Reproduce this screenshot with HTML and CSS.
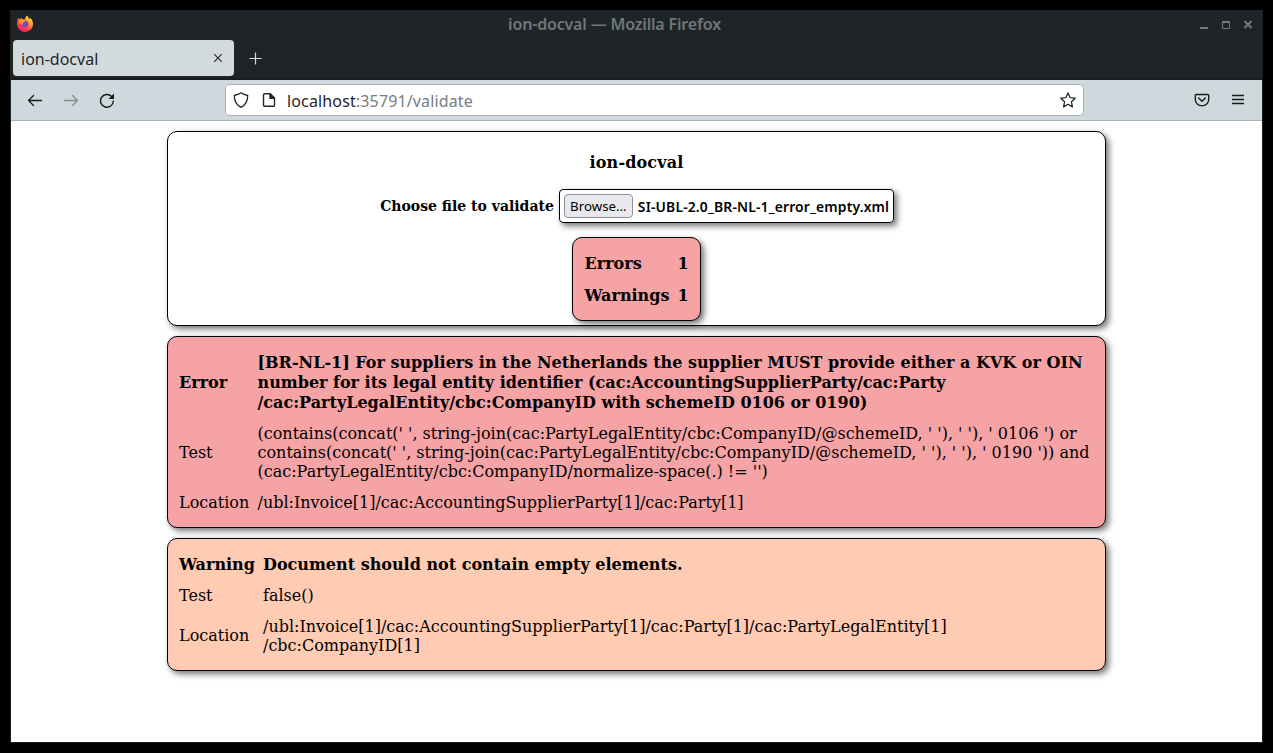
FILE: index.html
```html
<!DOCTYPE html>
<html lang="en">
<head>
<meta charset="utf-8">
<title>ion-docval</title>
<link rel="stylesheet" href="styles.css">
</head>
<body>
<div class="window">
  <header class="titlebar">
    <svg class="logo" width="18" height="18" viewBox="0 0 18 18">
      <defs>
        <linearGradient id="flame" x1="0.9" y1="0" x2="0.3" y2="1"><stop offset="0" stop-color="#fff04a"/><stop offset=".4" stop-color="#ffa022"/><stop offset=".75" stop-color="#ff3a48"/><stop offset="1" stop-color="#ee1878"/></linearGradient>
      </defs>
      <path fill="url(#flame)" d="M1.800 4.200 2.700 3l1.200 1.400L5.200 3l1.400 1.300 2.600.2C9 2.700 10 1.200 11.500.5c.2 1.600 1.200 2.400 2.300 3.400l.4-.8c2 1.600 3 4.200 2.800 6.700A8 7.800 0 0 1 9 16.900 8 7.800 0 0 1 1 9.300C1 7.500 1.200 5.700 1.800 4.200Z"/>
      <circle cx="9" cy="9" r="3.300" fill="#7644d8"/>
      <path fill="#ff9a22" d="M3.500 5.500c2-1.500 4.500-.8 5.600.9-1 .8-1.800.5-2.200 1.400-.4 1 .2 1.500-.7 2.300-1.800-.6-2.900-2.600-2.700-4.600Z"/>
    </svg>
    <div class="caption">ion-docval — Mozilla Firefox</div>
    <svg class="controls" width="56" height="12" viewBox="0 0 56 12" fill="none" stroke="#757b7d">
      <path stroke-width="2" d="M1 9h8"/>
      <path d="M23.500 3v6.500h7V3"/><path stroke-width="2" d="M23 3h8"/>
      <path stroke-width="2" d="m45.500 2 7 7M52.500 2l-7 7"/>
    </svg>
  </header>
  <div class="tabs">
    <div class="tab"><span>ion-docval</span>
      <svg width="10" height="10" viewBox="0 0 10 10" fill="none" stroke="#24282a" stroke-width="1.100"><path d="m1.200 1.200 7.600 7.600m0-7.600L1.200 8.800"/></svg>
    </div>
    <svg class="plus" width="13" height="13" viewBox="0 0 13 13" fill="none" stroke="#d8dcdd" stroke-width="1.200"><path d="M6.500 .5v12M.5 6.500h12"/></svg>
  </div>
  <nav class="toolbar">
    <div class="nav">
      <svg width="16" height="16" viewBox="0 0 16 16" fill="none" stroke="#171a1c" stroke-width="1.300" stroke-linecap="round" stroke-linejoin="round"><path d="M14.500 8.500H1.500m5-5-5 5 5 5"/></svg>
      <svg width="16" height="16" viewBox="0 0 16 16" fill="none" stroke="#858b8f" stroke-width="1.300" stroke-linecap="round" stroke-linejoin="round"><path d="M1.500 8.500h13m-5-5 5 5-5 5"/></svg>
      <svg width="16" height="16" viewBox="0 0 16 16" fill="none" stroke="#171a1c" stroke-width="1.400" stroke-linecap="round"><path d="M14.300 9A6.400 6.400 0 1 1 12.400 4.300"/><path fill="#171a1c" stroke="none" d="M15 1.500v5.500H9.500Z"/></svg>
    </div>
    <div class="address">
      <svg width="16" height="16" viewBox="0 0 16 16" fill="none" stroke="#24282a" stroke-width="1.300" stroke-linejoin="round"><path d="M8 .8C6.400 2.100 3.500 2.900 1.300 3.500c0 5 1.200 9.300 6.700 11.800 5.500-2.500 6.700-6.800 6.700-11.800C12.500 2.900 9.600 2.100 8 .8Z"/></svg>
      <svg class="doc" width="16" height="16" viewBox="0 0 16 16" fill="none" stroke="#24282a" stroke-width="1.400" stroke-linejoin="round"><path d="M9 1.700H3.700a1.200 1.200 0 0 0-1.200 1.200v10.200a1.200 1.200 0 0 0 1.200 1.200h8.600a1.200 1.200 0 0 0 1.200-1.200V6Z"/><path fill="#24282a" stroke="none" d="M8.300 1.200H9.500L14 5.700v1.200H8.300Z"/></svg>
      <div class="url">localhost<span>:35791/validate</span></div>
      <svg width="16" height="16" viewBox="0 0 16 16" fill="none" stroke="#24282a" stroke-width="1.300" stroke-linejoin="round"><path d="m8 .9 2.100 4.700 5.100.6-3.800 3.500 1 5.200L8 12.300l-4.400 2.600 1-5.200L.8 6.200l5.100-.6Z"/></svg>
    </div>
    <div class="actions">
      <svg width="16" height="16" viewBox="0 0 16 16" fill="none" stroke="#171a1c" stroke-width="1.400" stroke-linecap="round" stroke-linejoin="round"><path d="M2.500 2.500h11a1.200 1.200 0 0 1 1.200 1.200V7.500a6.700 6.400 0 0 1-13.400 0V3.700a1.200 1.200 0 0 1 1.200-1.200Z"/><path d="M4.700 6 8 9.200 11.300 6"/></svg>
      <svg width="16" height="16" viewBox="0 0 16 16" fill="none" stroke="#171a1c" stroke-width="1.300"><path d="M2 3.500h12M2 7.500h12M2 11.500h12"/></svg>
    </div>
  </nav>
  <main class="page">
    <section class="card summary">
      <h1>ion-docval</h1>
      <div class="chooser"><span>Choose file to validate</span>
        <div class="file"><button>Browse…</button><span>SI-UBL-2.0_BR-NL-1_error_empty.xml</span></div>
      </div>
      <div class="totals"><span>Errors</span><span>1</span><span>Warnings</span><span>1</span></div>
    </section>
    <section class="card report error">
      <b>Error</b><b>[BR-NL-1] For suppliers in the Netherlands the supplier MUST provide either a KVK or OIN<br>number for its legal entity identifier (cac:AccountingSupplierParty/cac:Party<br>/cac:PartyLegalEntity/cbc:CompanyID with schemeID 0106 or 0190)</b>
      <span>Test</span><span>(contains(concat(' ', string-join(cac:PartyLegalEntity/cbc:CompanyID/@schemeID, ' '), ' '), ' 0106 ') or<br>contains(concat(' ', string-join(cac:PartyLegalEntity/cbc:CompanyID/@schemeID, ' '), ' '), ' 0190 ')) and<br>(cac:PartyLegalEntity/cbc:CompanyID/normalize-space(.) != '')</span>
      <span>Location</span><span>/ubl:Invoice[1]/cac:AccountingSupplierParty[1]/cac:Party[1]</span>
    </section>
    <section class="card report warning">
      <b>Warning</b><b>Document should not contain empty elements.</b>
      <span>Test</span><span>false()</span>
      <span class="beside-two-lines">Location</span><span>/ubl:Invoice[1]/cac:AccountingSupplierParty[1]/cac:Party[1]/cac:PartyLegalEntity[1]<br>/cbc:CompanyID[1]</span>
    </section>
  </main>
</div>
</body>
</html>
```
FILE: styles.css
```css
* { box-sizing: border-box; }
body { margin: 0; padding: 10px; height: 753px; background: #000; overflow: hidden; font-family: "Noto Sans", sans-serif; }
svg { display: block; flex: none; }
.window { width: 1253px; height: 733px; display: flex; flex-direction: column; background: #1f2527; border: solid #1b2022; border-width: 0 1px 1px; }
.titlebar { height: 30px; display: flex; align-items: center; padding: 0 7px 2px 5px; }
.caption { flex: 1; text-align: center; font-size: 16px; font-weight: 600; letter-spacing: -.17px; color: #70777a; padding-right: 4px; white-space: nowrap; }
.controls { margin: 1px 0 0; }
.tabs { height: 40px; display: flex; align-items: flex-start; border-bottom: 2px solid #181c1e; padding-left: 2px; }
.tab { width: 221px; height: 36px; display: flex; align-items: center; justify-content: space-between; padding: 0 11px 0 8px; border-radius: 4px; background: #d3dade; color: #1f2527; font-size: 16px; }
.tab span { padding-top: 2px; }
.plus { margin: 12px 0 0 15px; }
.toolbar { height: 41px; display: flex; align-items: center; background: #cfd8dd; border-bottom: 1px solid #a5b3bc; padding: 0 16px; }
.nav { display: flex; gap: 20px; width: 198px; }
.address { width: 859px; height: 32px; display: flex; align-items: center; padding: 0 7px; background: #fff; border: 1px solid #a5b3bc; border-radius: 4px; color: #1f2527; font-size: 16px; }
.doc { margin-left: 12px; }
.url { flex: 1; padding: 2px 0 0 10px; white-space: nowrap; letter-spacing: .14px; }
.url span { color: #777c7e; }
.actions { display: flex; gap: 20px; margin-left: auto; }
.page { flex: 1; display: flex; flex-direction: column; align-items: center; gap: 10px; padding-top: 10px; background: #fff; color: #000; font: 16px/19px "DejaVu Serif", serif; }
.card { width: 939px; border: 1px solid #000; border-radius: 10px; box-shadow: 3px 3px 6px rgba(0,0,0,.55); }
.summary { height: 195px; display: flex; flex-direction: column; align-items: center; background: #fff; font-weight: bold; }
h1 { margin: 21px 0 16px; font-size: 16px; line-height: 20px; letter-spacing: .15px; }
.chooser { display: flex; align-items: center; gap: 5px; padding-left: 1px; font-size: 14px; white-space: nowrap; }
.file { width: 335px; height: 34px; display: flex; align-items: center; gap: 5px; padding-left: 4px; border: 1px solid #000; border-radius: 4px; box-shadow: 3px 3px 6px rgba(0,0,0,.55); font: 600 13.9px "Noto Sans", sans-serif; letter-spacing: .16px; }
button { width: 69px; height: 24px; padding: 0; border: 1px solid #8f8f9d; border-radius: 4px; background: #e9e9ed; color: #000; font: 13.3px "Noto Sans", sans-serif; }
.totals { width: 129px; height: 84px; margin-top: 14px; display: grid; grid-template-columns: 85px 11px; column-gap: 8px; row-gap: 12px; align-content: center; padding: 2px 0 0 11.5px; line-height: 20px; border: 1px solid #000; border-radius: 10px; background: #f5a3a5; box-shadow: 3px 3px 6px rgba(0,0,0,.55); }
.report { display: grid; column-gap: 8px; row-gap: 12px; align-items: center; padding: 15px 11px; white-space: nowrap; }
.report b { line-height: 20px; padding-top: 1px; margin-bottom: -1px; }
.beside-two-lines { padding-bottom: 1px; }
.error { grid-template-columns: 70.5px 1fr; background: #f5a3a5; }
.warning { grid-template-columns: 76px 1fr; background: #ffcbb3; }
```
